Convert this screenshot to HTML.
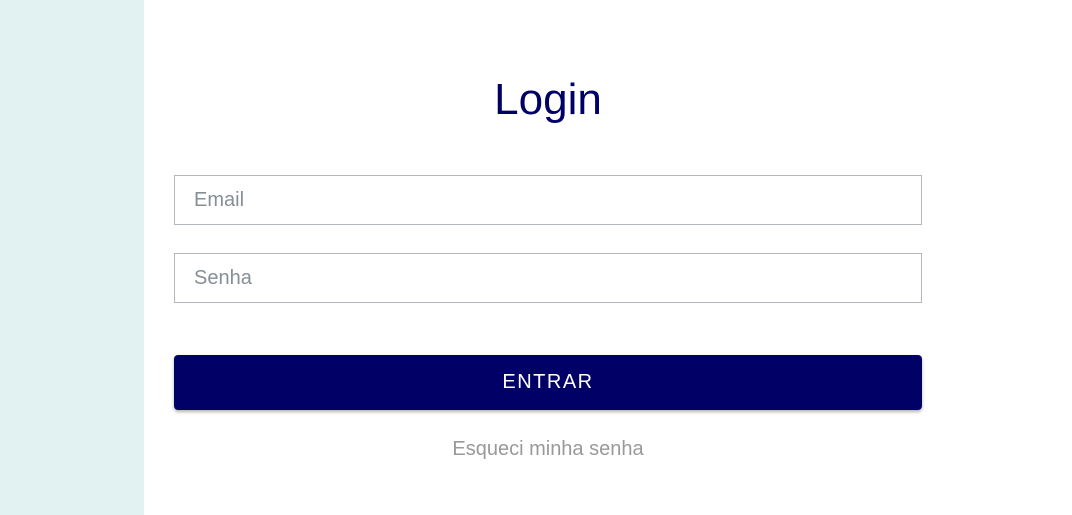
<!DOCTYPE html>
<html><head><meta charset="utf-8"><style>
html,body{margin:0;padding:0;width:1072px;height:515px;overflow:hidden;background:#fff;font-family:"Liberation Sans",Arial,sans-serif;}
.side{position:absolute;left:0;top:0;width:144px;height:515px;background:#e2f2f2;}
h1{position:absolute;left:174px;width:748px;top:73px;margin:0;text-align:center;font-weight:400;font-size:44px;line-height:54px;color:#000066;}
.inp{position:absolute;left:174px;width:746px;height:48px;border:1px solid #b3b8bd;}
.inp span{position:absolute;left:19px;top:13px;font-size:20px;color:#868e96;}
.btn{position:absolute;left:174px;top:355px;width:748px;height:55px;background:#000066;border-radius:4px;box-shadow:0 2px 3px rgba(0,0,0,.3);color:#fff;text-align:center;line-height:55px;font-size:20px;letter-spacing:1.5px;}
.fg{position:absolute;left:174px;width:748px;top:438px;text-align:center;font-size:20px;color:#999;}
</style></head><body>
<div class="side"></div>
<h1>Login</h1>
<div class="inp" style="top:175px"><span>Email</span></div>
<div class="inp" style="top:253px"><span>Senha</span></div>
<div class="btn">ENTRAR</div>
<div class="fg">Esqueci minha senha</div>
</body></html>
